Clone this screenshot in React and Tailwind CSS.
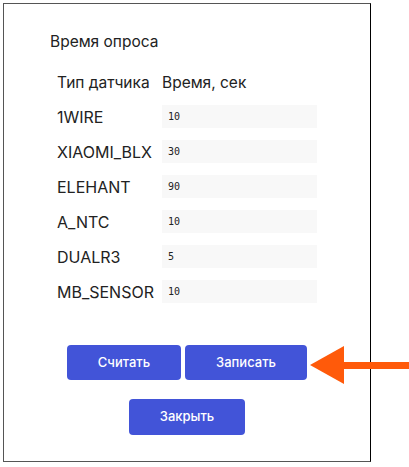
import React from "react";

const ROWS = [
  { name: "1WIRE", val: "10" },
  { name: "XIAOMI_BLX", val: "30" },
  { name: "ELEHANT", val: "90" },
  { name: "A_NTC", val: "10" },
  { name: "DUALR3", val: "5" },
  { name: "MB_SENSOR", val: "10" },
];

export default function App() {
  return (
    <div className="relative w-[409px] h-[467px] bg-white pt-[3px] pl-[3px] font-['Inter','Noto_Sans',sans-serif] text-[#222]">
      <div className="w-[368px] h-[459px] border border-[#555] border-r-black flex flex-col">
        <div className="pl-[46px] pt-[28px] text-[15.5px] leading-[20px]">Время опроса</div>

        <div className="pl-[53px] pt-[21px] grid grid-cols-[105px_155px] gap-y-[12px] items-center">
          <div className="leading-[20px] h-[20px] text-[15.5px]">Тип датчика</div>
          <div className="leading-[20px] h-[20px] text-[15.5px]">Время, сек</div>
          {ROWS.map((r) => (
            <React.Fragment key={r.name}>
              <div className="leading-[20px] text-[16px]">{r.name}</div>
              <input
                readOnly
                value={r.val}
                className="h-[23px] w-[155px] bg-[#f8f8f8] px-[6px] text-[10px] font-['DejaVu_Sans_Mono',monospace] text-[#222] outline-none"
              />
            </React.Fragment>
          ))}
        </div>

        <div className="mt-[42px] flex justify-center gap-[4px]">
          <button className="w-[114px] h-[35px] rounded-[4px] bg-[#4254d8] text-white text-[13px] font-medium">Считать</button>
          <button className="w-[122px] h-[35px] rounded-[4px] bg-[#4254d8] text-white text-[13px] font-medium">Записать</button>
        </div>
        <div className="mt-[19px] flex justify-center">
          <button className="w-[116px] h-[36px] rounded-[4px] bg-[#4254d8] text-white text-[13px] font-medium">Закрыть</button>
        </div>
      </div>

      <svg className="absolute left-[310px] top-[346px]" width="99" height="38" viewBox="0 0 99 38">
        <polygon points="0,19 34,0 34,38" fill="#ff5a0a" />
        <rect x="33" y="16" width="66" height="7" fill="#ff5a0a" />
      </svg>
    </div>
  );
}
